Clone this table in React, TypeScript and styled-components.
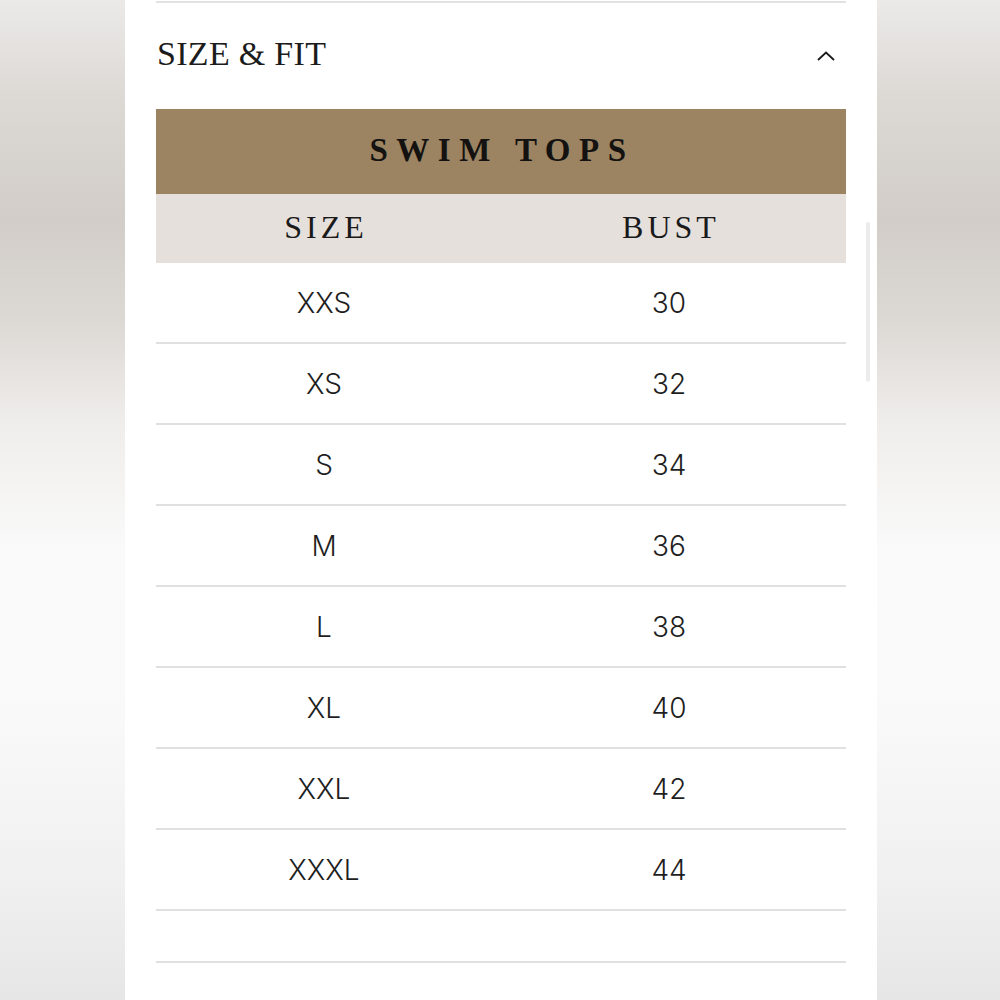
import React from "react";
import styled, { createGlobalStyle } from "styled-components";

const GlobalStyle = createGlobalStyle`
    html, body {
        margin: 0;
        padding: 0;
    }

    body {
        height: 1000px;
        overflow: hidden;
        background: linear-gradient(
            to bottom,
            #ebeae8 0%,
            #dcd8d4 10%,
            #d2cdc8 22%,
            #dcd8d4 32%,
            #efedeb 42%,
            #fafafa 55%,
            #f9f9f9 72%,
            #f0f0f0 88%,
            #e6e6e6 100%
        );
    }
`;

const Page = styled.div`
    display: flex;
    justify-content: center;
    padding-left: 2px;
    height: 1000px;
`;

const Panel = styled.div`
    position: relative;
    width: 752px;
    box-sizing: border-box;
    padding: 1px 31px 0;
    background: #ffffff;
`;

const Rule = styled.div`
    height: 2px;
    background: #e2e2e2;
`;

const SectionHeader = styled.div`
    display: flex;
    align-items: center;
    justify-content: space-between;
    height: 106px;
`;

const SectionTitle = styled.h2`
    margin: 0 0 4px;
    padding-left: 1px;
    font-family: "Liberation Serif", "DejaVu Serif", serif;
    font-weight: 400;
    font-size: 34px;
    color: #1c1c1c;
    letter-spacing: 0.3px;
`;

const Chevron = styled.svg`
    width: 18px;
    height: 10px;
    margin-right: 11px;
`;

const Table = styled.div`
    display: flex;
    flex-direction: column;
`;

const TitleBar = styled.div`
    display: flex;
    align-items: center;
    justify-content: center;
    height: 85px;
    background: #9c8462;
    font-family: "Liberation Serif", "DejaVu Serif", serif;
    font-weight: 700;
    font-size: 33px;
    letter-spacing: 8.5px;
    color: #141210;
    padding-left: 2px;
    padding-bottom: 2px;
    box-sizing: border-box;
`;

const Grid = styled.div`
    display: grid;
    grid-template-columns: 336px 1fr;
`;

const HeadRow = styled(Grid)`
    height: 69px;
    align-items: center;
    background: #e6e0dc;
    font-family: "Liberation Serif", "DejaVu Serif", serif;
    font-size: 32px;
    letter-spacing: 4px;
    color: #1a1a1a;
`;

const BodyRow = styled(Grid)`
    height: 79px;
    align-items: center;
    border-bottom: 2px solid #e0e0e0;
    font-family: Inter, "Open Sans", sans-serif;
    font-weight: 300;
    font-size: 28px;
    color: #1e1e1e;
`;

const Cell = styled.div<{ $head?: boolean }>`
    text-align: center;
    padding-left: ${p => (p.$head ? "4px" : "0")};
    padding-bottom: ${p => (p.$head ? "2px" : "0")};
`;

const Spacer = styled.div`
    height: 50px;
    border-bottom: 2px solid #e0e0e0;
`;

const Scrollbar = styled.div`
    position: absolute;
    top: 222px;
    right: 7px;
    width: 4px;
    height: 160px;
    border-radius: 2px;
    background: #ececec;
`;

const sizes: [string, string][] = [
    ["XXS", "30"],
    ["XS", "32"],
    ["S", "34"],
    ["M", "36"],
    ["L", "38"],
    ["XL", "40"],
    ["XXL", "42"],
    ["XXXL", "44"],
];

export default function App() {
    return (
        <>
            <GlobalStyle />
            <Page>
                <Panel>
                    <Rule />
                    <SectionHeader>
                        <SectionTitle>SIZE &amp; FIT</SectionTitle>
                        <Chevron viewBox="0 0 18 10">
                            <path d="M1 9 L9 1.5 L17 9" fill="none" stroke="#1a1a1a" strokeWidth="1.8" />
                        </Chevron>
                    </SectionHeader>
                    <Table>
                        <TitleBar>SWIM TOPS</TitleBar>
                        <HeadRow>
                            <Cell $head>SIZE</Cell>
                            <Cell $head>BUST</Cell>
                        </HeadRow>
                        {sizes.map(([size, bust]) => (
                            <BodyRow key={size}>
                                <Cell>{size}</Cell>
                                <Cell>{bust}</Cell>
                            </BodyRow>
                        ))}
                        <Spacer />
                    </Table>
                    <Scrollbar />
                </Panel>
            </Page>
        </>
    );
}
